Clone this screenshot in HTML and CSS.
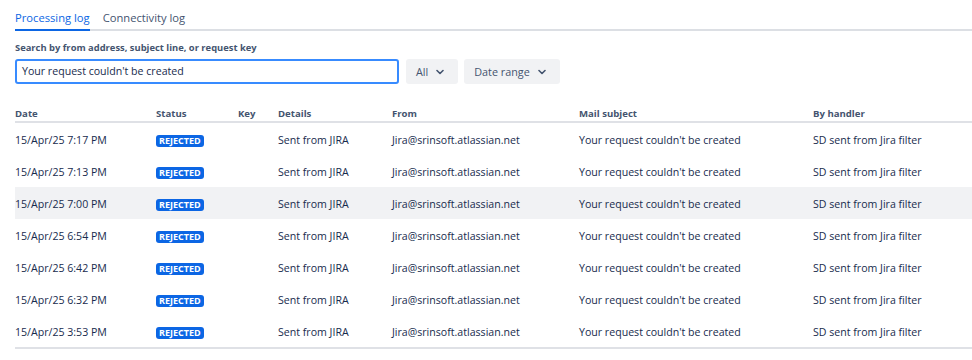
FILE: index.html
```html
<!DOCTYPE html>
<html>
<head>
	<title>Email log</title>
	<link rel="stylesheet" href="styles.css">
</head>
<body>
	<div class="page">
		<div class="tabs">
			<div class="tab active">Processing log</div>
			<div class="tab">Connectivity log</div>
		</div>

		<div class="filters">
			<label class="label">Search by from address, subject line, or request key</label>
			<div class="filterRow">
				<div class="search">Your request couldn't be created</div>
				<div class="btn">All <span class="chev"><svg width="8" height="6" viewBox="0 0 8 6"><path d="M1 1.5l3 3 3-3" fill="none" stroke="#44546f" stroke-width="1.6" stroke-linecap="round" stroke-linejoin="round"/></svg></span></div>
				<div class="btn">Date range <span class="chev"><svg width="8" height="6" viewBox="0 0 8 6"><path d="M1 1.5l3 3 3-3" fill="none" stroke="#44546f" stroke-width="1.6" stroke-linecap="round" stroke-linejoin="round"/></svg></span></div>
			</div>
		</div>

		<table class="log">
			<thead>
				<tr>
					<th class="cDate">Date</th>
					<th class="cStatus">Status</th>
					<th class="cKey">Key</th>
					<th class="cDetails">Details</th>
					<th class="cFrom">From</th>
					<th class="cSubject">Mail subject</th>
					<th>By handler</th>
				</tr>
			</thead>
			<tbody>
				<tr>
					<td>15/Apr/25 7:17 PM</td>
					<td><span class="lozenge">Rejected</span></td>
					<td></td>
					<td>Sent from JIRA</td>
					<td>Jira@srinsoft.atlassian.net</td>
					<td>Your request couldn't be created</td>
					<td>SD sent from Jira filter</td>
				</tr>
				<tr>
					<td>15/Apr/25 7:13 PM</td>
					<td><span class="lozenge">Rejected</span></td>
					<td></td>
					<td>Sent from JIRA</td>
					<td>Jira@srinsoft.atlassian.net</td>
					<td>Your request couldn't be created</td>
					<td>SD sent from Jira filter</td>
				</tr>
				<tr class="hover">
					<td>15/Apr/25 7:00 PM</td>
					<td><span class="lozenge">Rejected</span></td>
					<td></td>
					<td>Sent from JIRA</td>
					<td>Jira@srinsoft.atlassian.net</td>
					<td>Your request couldn't be created</td>
					<td>SD sent from Jira filter</td>
				</tr>
				<tr>
					<td>15/Apr/25 6:54 PM</td>
					<td><span class="lozenge">Rejected</span></td>
					<td></td>
					<td>Sent from JIRA</td>
					<td>Jira@srinsoft.atlassian.net</td>
					<td>Your request couldn't be created</td>
					<td>SD sent from Jira filter</td>
				</tr>
				<tr>
					<td>15/Apr/25 6:42 PM</td>
					<td><span class="lozenge">Rejected</span></td>
					<td></td>
					<td>Sent from JIRA</td>
					<td>Jira@srinsoft.atlassian.net</td>
					<td>Your request couldn't be created</td>
					<td>SD sent from Jira filter</td>
				</tr>
				<tr>
					<td>15/Apr/25 6:32 PM</td>
					<td><span class="lozenge">Rejected</span></td>
					<td></td>
					<td>Sent from JIRA</td>
					<td>Jira@srinsoft.atlassian.net</td>
					<td>Your request couldn't be created</td>
					<td>SD sent from Jira filter</td>
				</tr>
				<tr>
					<td>15/Apr/25 3:53 PM</td>
					<td><span class="lozenge">Rejected</span></td>
					<td></td>
					<td>Sent from JIRA</td>
					<td>Jira@srinsoft.atlassian.net</td>
					<td>Your request couldn't be created</td>
					<td>SD sent from Jira filter</td>
				</tr>
			</tbody>
		</table>
	</div>
</body>
</html>
```

FILE: styles.css
```css
	body{
		margin: 0;
		background: #fff;
		color: #172b4d;
		font-family: "Open Sans", "Noto Sans", sans-serif;
		font-size: 10.6px;
	}
	.page{
		padding: 8px 0 0 15px;
	}

	.tabs{
		display: flex;
		gap: 13px;
		border-bottom: 2px solid #dcdfe4;
		height: 21px;
	}
	.tab{
		font-size: 11.2px;
		color: #44546f;
		line-height: 20px;
		padding-bottom: 1px;
	}
	.tab.active{
		color: #0c66e4;
		border-bottom: 2px solid #0c66e4;
		margin-bottom: -2px;
	}

	.filters{
		margin-top: 10px;
	}
	.label{
		display: block;
		font-size: 9.4px;
		font-weight: 700;
		color: #44546f;
		line-height: 14px;
	}
	.filterRow{
		display: flex;
		gap: 6px;
		margin-top: 4px;
	}
	.search{
		box-sizing: border-box;
		width: 384px;
		height: 25px;
		margin-right: 1px;
		border: 2px solid #388bff;
		border-radius: 3px;
		padding: 0 5px;
		line-height: 21px;
		font-size: 10.6px;
	}
	.btn{
		display: flex;
		align-items: center;
		height: 25px;
		padding: 0 6px 0 10px;
		background: #f1f2f4;
		border-radius: 3px;
		font-size: 10.8px;
		color: #44546f;
	}
	.chev{
		display: flex;
		align-items: center;
		justify-content: center;
		width: 24px;
	}

	.log{
		border-collapse: collapse;
		width: 957px;
		margin-top: 19px;
	}
	.log th{
		text-align: left;
		font-size: 9.6px;
		font-weight: 700;
		color: #44546f;
		height: 16px;
		padding: 2px 0 0;
		border-bottom: 2px solid #dfe1e6;
	}
	.log td{
		height: 30px;
		padding: 2px 0 0;
		white-space: nowrap;
	}
	.log tbody tr:last-child td{
		border-bottom: 2px solid #dfe1e6;
	}
	.log tr.hover td{
		background: #f1f2f4;
	}
	.cDate{ width: 141px; }
	.cStatus{ width: 82px; }
	.cKey{ width: 40px; }
	.cDetails{ width: 114px; }
	.cFrom{ width: 187px; }
	.cSubject{ width: 234px; }

	.lozenge{
		display: inline-block;
		background: #0c66e4;
		color: #fff;
		font-size: 9px;
		font-weight: 700;
		text-transform: uppercase;
		line-height: 12px;
		padding: 0 3px;
		border-radius: 3px;
		vertical-align: middle;
	}
```
